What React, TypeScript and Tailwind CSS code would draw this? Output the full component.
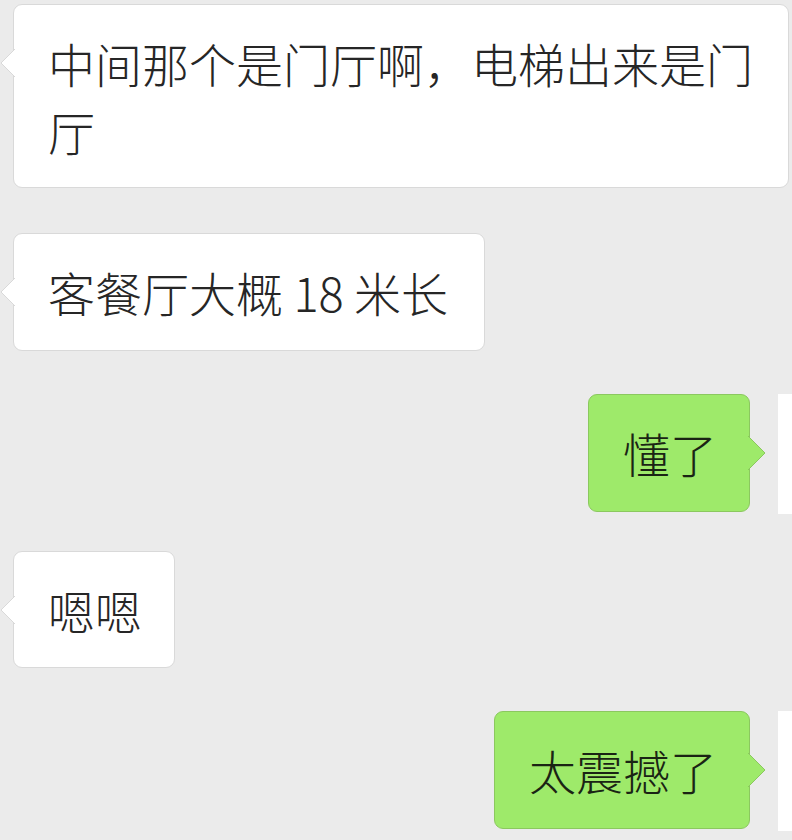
import React from "react";

const font = {
  fontFamily: '"Noto Sans CJK SC", "Noto Sans", sans-serif',
};

function LeftTail({ top }: { top: number }) {
  return (
    <svg
      className="absolute"
      style={{ left: -14, top }}
      width="15"
      height="30"
      viewBox="0 0 15 30"
    >
      <path d="M15 1 L1 15 L15 29 Z" fill="#ffffff" stroke="#d9d9d9" strokeWidth="1" />
      <rect x="14" y="2" width="2" height="26" fill="#ffffff" />
    </svg>
  );
}

function RightTail({ top }: { top: number }) {
  return (
    <svg
      className="absolute"
      style={{ right: -17, top }}
      width="18"
      height="36"
      viewBox="0 0 18 36"
    >
      <path d="M0 1 L17 18 L0 35 Z" fill="#9eea6a" stroke="#8bc85f" strokeWidth="1" />
      <rect x="-1" y="2" width="2" height="32" fill="#9eea6a" />
    </svg>
  );
}

function LeftBubble({ children, className = "" }: { children: React.ReactNode; className?: string }) {
  return (
    <div
      className={`relative bg-white border border-[#d9d9d9] rounded-[9px] text-[#262626] font-light text-[47px] leading-[68px] py-[24px] pl-[34px] pr-[32px] ${className}`}
      style={font}
    >
      <LeftTail top={43} />
      {children}
    </div>
  );
}

function RightBubble({ children }: { children: React.ReactNode }) {
  return (
    <div
      className="relative bg-[#9eea6a] border border-[#8bc85f] rounded-[9px] text-[#1a2414] font-light text-[47px] leading-[68px] py-[24px] pl-[34px] pr-[32px]"
      style={font}
    >
      <RightTail top={40} />
      {children}
    </div>
  );
}

export default function App() {
  return (
    <div className="w-[792px] h-[840px] bg-[#ebebeb] overflow-hidden flex flex-col">
      <div className="mt-[4px] ml-[13px] mr-[3px]">
        <LeftBubble className="w-[776px] h-[184px]">
          中间那个是门厅啊，电梯出来是门
          <br />
          厅
        </LeftBubble>
      </div>

      <div className="mt-[45px] ml-[13px] flex">
        <LeftBubble className="w-[472px] h-[118px] whitespace-nowrap">客餐厅大概 18 米长</LeftBubble>
      </div>

      <div className="mt-[43px] flex justify-end items-start">
        <div className="h-[118px] flex">
          <RightBubble>懂了</RightBubble>
        </div>
        <div className="ml-[28px] w-[14px] h-[120px] bg-white" />
      </div>

      <div className="mt-[37px] ml-[13px] flex">
        <LeftBubble className="w-[162px] h-[117px] whitespace-nowrap">嗯嗯</LeftBubble>
      </div>

      <div className="mt-[43px] flex justify-end items-start">
        <div className="h-[118px] flex">
          <RightBubble>太震撼了</RightBubble>
        </div>
        <div className="ml-[28px] w-[14px] h-[120px] bg-white" />
      </div>
    </div>
  );
}
